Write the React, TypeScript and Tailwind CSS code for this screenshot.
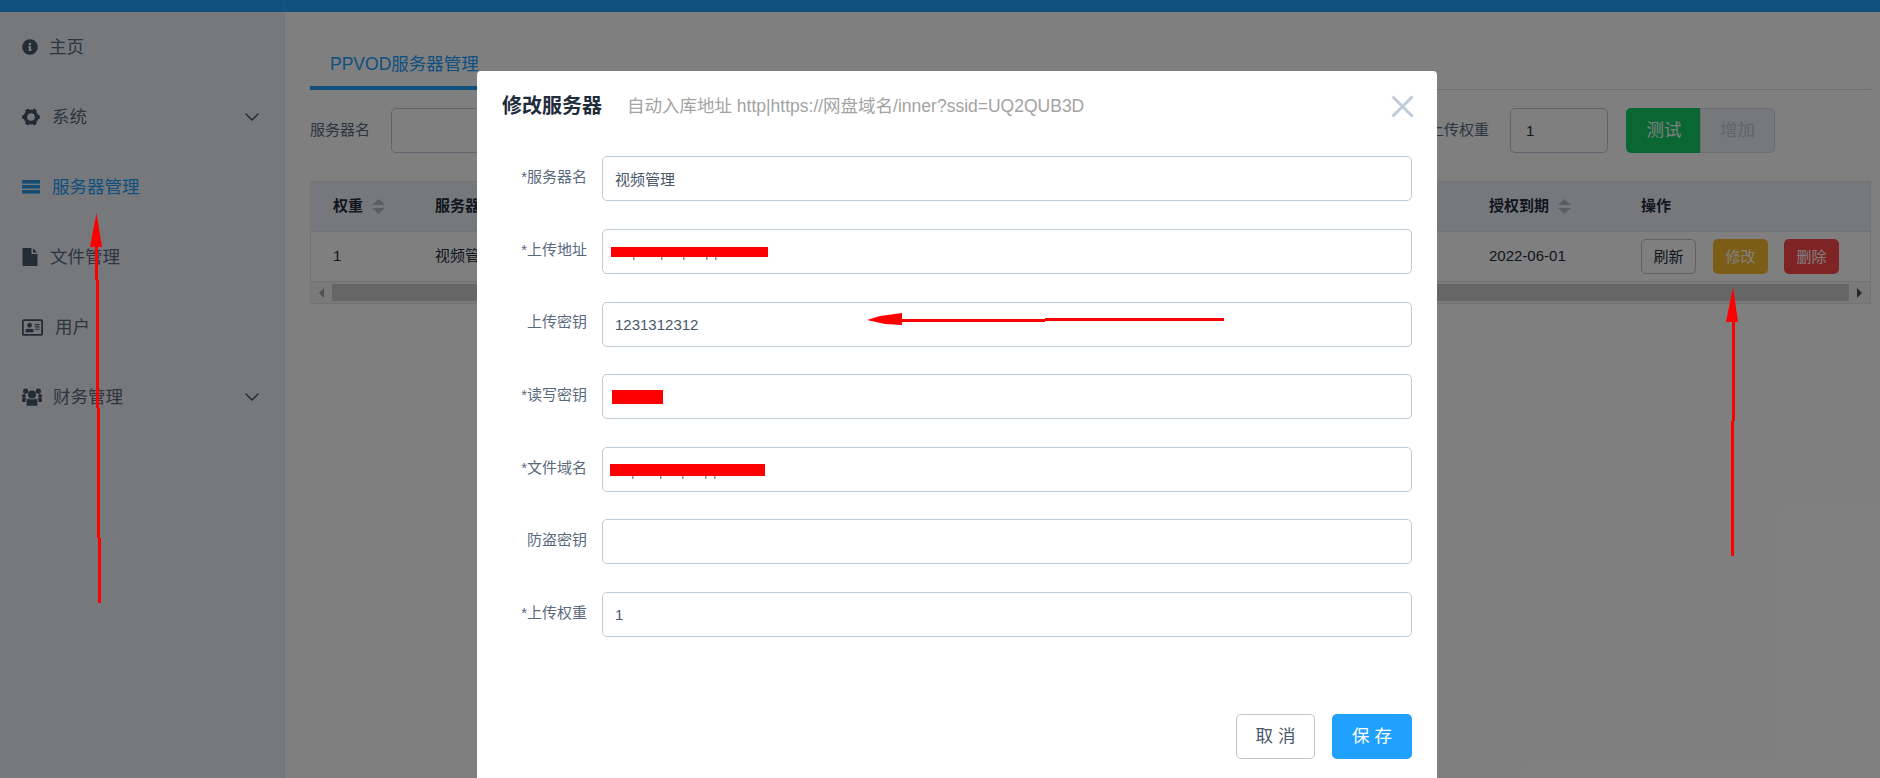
import React from "react";
import { ChevronDown } from "lucide-react";
import { FaInfoCircle, FaRegAddressCard } from "react-icons/fa";

const fontStack = "font-['Liberation_Sans','Noto_Sans_CJK_SC',sans-serif]";

function CogIcon() {
  const teeth = [30, 90, 150, 210, 270, 330];
  return (
    <svg width="18" height="18" viewBox="0 0 18 18" fill="currentColor">
      <circle cx="9" cy="9" r="5.6" fill="none" stroke="currentColor" strokeWidth="3.6" />
      {teeth.map((deg) => (
        <rect key={deg} x="7" y="0.2" width="4" height="4" rx="0.8" transform={`rotate(${deg} 9 9)`} />
      ))}
    </svg>
  );
}

function ServerIcon() {
  return (
    <svg width="18" height="14" viewBox="0 0 18 14" fill="currentColor">
      {[0, 5, 10].map((y) => (
        <g key={y}>
          <rect x="0" y={y} width="18" height="3.6" />
          <rect x="1.5" y={y + 1.4} width="10" height="0.8" fill="#777879" />
          <rect x="14.5" y={y + 1.2} width="1.4" height="1.2" fill="#777879" />
        </g>
      ))}
    </svg>
  );
}

function FileIcon() {
  return (
    <svg width="16" height="18" viewBox="0 0 16 18" fill="currentColor">
      <path d="M0.5 0 H9.5 V6 H15.5 V17 a1 1 0 0 1 -1 1 H1.5 a1 1 0 0 1 -1 -1 Z" />
      <path d="M11 0.3 L15.3 4.6 H11 Z" />
    </svg>
  );
}

function UsersIcon() {
  return (
    <svg width="20" height="18" viewBox="0 0 20 18" fill="currentColor">
      <circle cx="3.6" cy="3.2" r="2.6" />
      <circle cx="16.4" cy="3.2" r="2.6" />
      <circle cx="1.9" cy="8" r="1.9" />
      <circle cx="18.1" cy="8" r="1.9" />
      <circle cx="10" cy="6.4" r="4" />
      <path d="M4.6 17.8 V13.4 C4.6 11 6.4 10.6 7.4 10.8 C8.8 11.6 11.2 11.6 12.6 10.8 C13.6 10.6 15.4 11 15.4 13.4 V17.8 Z" />
      <path d="M0 11.4 C0 10 1.4 9.8 2.4 10 L5 10.4 C3.8 11.4 3.4 12.4 3.4 14 H1 C0.4 14 0 13.6 0 13 Z" />
      <path d="M20 11.4 C20 10 18.6 9.8 17.6 10 L15 10.4 C16.2 11.4 16.6 12.4 16.6 14 H19 C19.6 14 20 13.6 20 13 Z" />
    </svg>
  );
}

function SortIcon() {
  return (
    <svg width="13" height="15" viewBox="0 0 13 15" fill="#b4bccc">
      <path d="M6.5 0 L13 6 H0 Z" />
      <path d="M0 9 H13 L6.5 15 Z" />
    </svg>
  );
}

const menuItems = [
  { label: "主页", icon: <FaInfoCircle className="text-[16px]" />, box: "w-[27px]" },
  { label: "系统", icon: <CogIcon />, box: "w-[30px]", arrow: true },
  { label: "服务器管理", icon: <ServerIcon />, box: "w-[30px]", active: true },
  { label: "文件管理", icon: <FileIcon />, box: "w-[28px]" },
  { label: "用户", icon: <FaRegAddressCard className="text-[21px]" />, box: "w-[33px]" },
  { label: "财务管理", icon: <UsersIcon />, box: "w-[31px]", arrow: true },
];

const formFields = [
  { label: "*服务器名", value: "视频管理" },
  { label: "*上传地址", value: "" },
  { label: "上传密钥", value: "1231312312" },
  { label: "*读写密钥", value: "" },
  { label: "*文件域名", value: "" },
  { label: "防盗密钥", value: "" },
  { label: "*上传权重", value: "1" },
];

function Sidebar() {
  return (
    <aside className="w-[285px] shrink-0 border-r border-[#e4e8ef] bg-[#eef1f6]">
      {menuItems.map((item) => (
        <div
          key={item.label}
          className={`flex h-[70px] items-center pl-[22px] pr-[20px] text-[17.5px] ${
            item.active ? "text-[#20a0ff]" : "text-[#48576a]"
          }`}
        >
          <span className={`shrink-0 ${item.box}`}>{item.icon}</span>
          <span className={`flex-1 ${item.active ? "" : "text-[#5a6a7e]"}`}>{item.label}</span>
          {item.arrow && <ChevronDown className="h-[24px] w-[24px]" strokeWidth={1.5} />}
        </div>
      ))}
    </aside>
  );
}

function SortHead({ label, className }: { label: string; className: string }) {
  return (
    <div className={`flex items-center gap-[9px] font-bold ${className}`}>
      {label}
      <SortIcon />
    </div>
  );
}

function ServerTable() {
  return (
    <div className="mt-[28px] border border-[#dfe6ec] text-[15px] text-[#1f2d3d]">
      <div className="flex h-[50px] items-center border-b border-[#dfe6ec] bg-[#eef1f6]">
        <SortHead label="权重" className="w-[124px] pl-[22px]" />
        <div className="flex-1 font-bold">服务器名</div>
        <SortHead label="授权到期" className="w-[152px]" />
        <div className="w-[229px] font-bold">操作</div>
      </div>
      <div className="flex h-[50px] items-center border-b border-[#dfe6ec]">
        <div className="w-[124px] pl-[22px]">1</div>
        <div className="flex-1">视频管理</div>
        <div className="w-[152px]">2022-06-01</div>
        <div className="flex w-[229px] text-center leading-[33px]">
          <div className="h-[35px] w-[55px] rounded-[5px] border border-[#c4c4c4] bg-white">刷新</div>
          <div className="ml-[17px] h-[35px] w-[55px] rounded-[5px] bg-[#f7ba2a] leading-[35px] text-white">修改</div>
          <div className="ml-[16px] h-[35px] w-[55px] rounded-[5px] bg-[#ff4949] leading-[35px] text-white">删除</div>
        </div>
      </div>
      <div className="flex h-[21px] items-center bg-[#f5f5f5] px-[8px]">
        <span className="h-0 w-0 border-y-[5px] border-r-[5px] border-y-transparent border-r-[#a3a3a3]" />
        <div className="mx-[8px] h-[17px] flex-1 bg-[#cdcdcd]" />
        <span className="h-0 w-0 border-y-[5px] border-l-[5px] border-y-transparent border-l-[#505050]" />
      </div>
    </div>
  );
}

function MainPanel() {
  return (
    <main className="flex-1 bg-white pl-[25px] pr-[9px] pt-[30px]">
      <div className="h-[48px] border-b border-[#d1dbe5]">
        <div className="h-[48px] w-[200px] border-b-[4px] border-[#20a0ff] pl-[20px] pt-[8px] text-[17.5px] leading-[28px] text-[#20a0ff]">
          PPVOD服务器管理
        </div>
      </div>
      <div className="mt-[18px] flex h-[45px] items-center text-[15px] text-[#5a6a7e]">
        <span className="mr-[21px]">服务器名</span>
        <input
          readOnly
          className="h-[45px] w-[300px] rounded-[5px] border border-[#bfcbd9] bg-white"
        />
        <span className="ml-auto mr-[21px]">上传权重</span>
        <input
          readOnly
          value="1"
          className="h-[45px] w-[98px] rounded-[5px] border border-[#bfcbd9] bg-white px-[15px] text-[#1f2d3d]"
        />
        <div className="ml-[18px] mr-[96px] flex h-[45px] text-center text-[17.5px] leading-[45px]">
          <div className="w-[74px] rounded-l-[5px] bg-[#13ce66] pl-[2px] text-white">测试</div>
          <div className="w-[75px] rounded-r-[5px] border border-[#d1dbe5] bg-[#eef1f6] leading-[43px] text-[#bfcbd9]">
            增加
          </div>
        </div>
      </div>
      <ServerTable />
    </main>
  );
}

function EditDialog() {
  return (
    <div className="absolute left-[477px] top-[71px] h-[720px] w-[960px] rounded-[4px] bg-white">
      <div className="relative flex h-[85.4px] items-center pb-[15px] pl-[25px]">
        <span className="text-[20px] font-bold text-[#1f2d3d]">修改服务器</span>
        <span className="ml-[25px] text-[17.5px] text-[#a3a3a3]">
          自动入库地址 http|https://网盘域名/inner?ssid=UQ2QUB3D
        </span>
        <svg
          className="absolute left-[914px] top-[24px]"
          width="23"
          height="23"
          viewBox="0 0 23 23"
          stroke="#bfcbd9"
          strokeWidth="3"
        >
          <path d="M1.5 1.5 L21.5 21.5 M21.5 1.5 L1.5 21.5" />
        </svg>
      </div>
      {formFields.map((field) => (
        <div key={field.label} className="mb-[27.6px] flex h-[45px] items-center">
          <label className="w-[110px] pb-[3px] text-right text-[15px] text-[#5a6a7e]">{field.label}</label>
          <input
            readOnly
            value={field.value}
            className="ml-[15px] h-[45px] w-[810px] rounded-[5px] border border-[#bfcbd9] px-[12px] text-[15px] text-[#48576a] outline-none"
          />
        </div>
      ))}
      <div className="mt-[76.6px] flex justify-end gap-[17px] pr-[25px] text-[17.5px]">
        <button className="h-[45px] w-[79px] rounded-[5px] border border-[#c4c4c4] bg-white text-[#48576a]">取 消</button>
        <button className="h-[45px] w-[80px] rounded-[5px] bg-[#20a0ff] text-white">保 存</button>
      </div>
    </div>
  );
}

// 截图上手画的红色箭头和涂抹
function Annotations() {
  const specks = [633, 661, 683, 706, 715];
  return (
    <svg className="pointer-events-none absolute left-0 top-0" width={1880} height={778}>
      {[257, 476].map((y) => (
        <g key={y} fill="#8a8f97">
          {specks.map((x) => (
            <rect key={x} x={y === 257 ? x : x - 1} y={y} width={1.5} height={3} />
          ))}
        </g>
      ))}
      <g fill="#ff0000">
        <rect x={611} y={247} width={157} height={10} />
        <rect x={612} y={390} width={51} height={14} />
        <rect x={610} y={464} width={155} height={12} />

        <path d="M96.5 213 L102 247 L90 247 Z" />
        <rect x={95} y={247} width={3} height={33} />
        <rect x={96} y={280} width={3} height={128} />
        <rect x={97} y={408} width={3} height={130} />
        <rect x={98} y={538} width={3} height={65} />

        <path d="M1733 287 L1738 322 L1726 322 Z" />
        <rect x={1732} y={322} width={3} height={99} />
        <rect x={1731} y={421} width={3} height={135} />

        <path d="M867 320 L880 316 L902 313 L902 325 L885 324 Z" />
        <rect x={902} y={319} width={143} height={3} />
        <rect x={1045} y={318} width={179} height={3} />
      </g>
    </svg>
  );
}

export default function App() {
  return (
    <div className={`relative h-[778px] overflow-hidden bg-white ${fontStack}`}>
      <div className="flex h-[12px] bg-[#20a0ff]">
        <div className="w-[285px] border-r border-[#3aa9f8]" />
      </div>
      <div className="flex h-[766px]">
        <Sidebar />
        <MainPanel />
      </div>
      <div className="absolute inset-0 bg-black/50" />
      <EditDialog />
      <Annotations />
    </div>
  );
}
